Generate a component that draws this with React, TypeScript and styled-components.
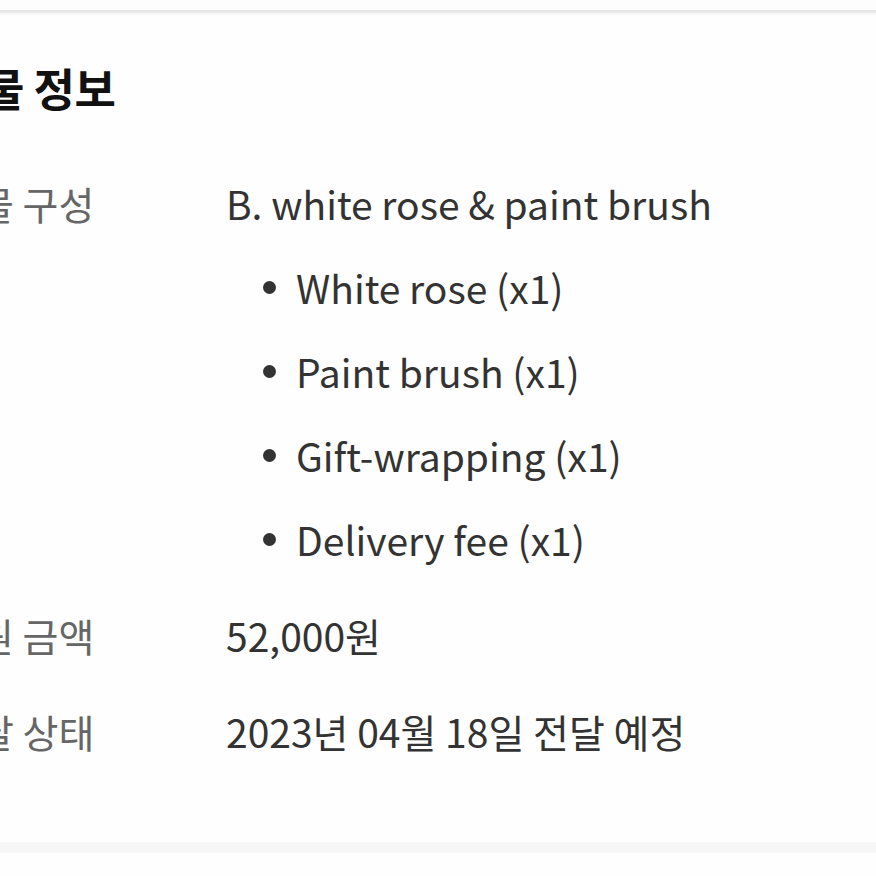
import React from "react";
import styled, { createGlobalStyle } from "styled-components";

const Global = createGlobalStyle`
  html, body { margin: 0; padding: 0; background: #fefefe; }
  body { font-family: "Noto Sans CJK KR", "Noto Sans", sans-serif; overflow: hidden; }
`;

const Page = styled.div`
  width: 876px;
  height: 876px;
  overflow: hidden;
  background: #fefefe;
  display: flex;
  flex-direction: column;
`;

const TopGap = styled.div`
  height: 10px;
  background: #fdfdfd;
`;

const TopRule = styled.div`
  height: 5px;
  background: linear-gradient(#e6e6e6 0, #e6e6e6 2px, #f3f3f3 3px, #fafafa 5px);
`;

const Section = styled.section`
  margin-left: -58px;
  padding: 47px 0 86px;
  display: flex;
  flex-direction: column;
`;

const Title = styled.h2`
  margin: 0 0 64px;
  font-size: 45px;
  line-height: 52px;
  font-weight: 700;
  color: #111;
  letter-spacing: -0.5px;
`;

const Rows = styled.div`
  display: flex;
  flex-direction: column;
  gap: 46px;
`;

const Row = styled.div`
  display: grid;
  grid-template-columns: 284px 1fr;
  align-items: start;
`;

const Label = styled.div`
  font-size: 39px;
  line-height: 50px;
  color: #666;
  white-space: nowrap;
`;

const Value = styled.div`
  font-size: 39px;
  line-height: 50px;
  color: #333;
  white-space: nowrap;
`;

const Items = styled.ul`
  list-style: none;
  margin: 34px 0 0;
  padding: 0 0 0 37px;
  display: flex;
  flex-direction: column;
  gap: 34px;
`;

const Item = styled.li`
  display: flex;
  align-items: center;
  gap: 20px;
  font-size: 39px;
  line-height: 50px;
  color: #333;
`;

const Dot = styled.span`
  width: 13px;
  height: 13px;
  border-radius: 50%;
  background: #333;
  flex: none;
`;

const BottomBand = styled.div`
  height: 11px;
  background: #f7f7f7;
`;

const items = ["White rose (x1)", "Paint brush (x1)", "Gift-wrapping (x1)", "Delivery fee (x1)"];

export default function App() {
  return (
    <Page>
      <Global />
      <TopGap />
      <TopRule />
      <Section>
        <Title>선물 정보</Title>
        <Rows>
          <Row>
            <Label>선물 구성</Label>
            <div>
              <Value>B. white rose &amp; paint brush</Value>
              <Items>
                {items.map((t) => (
                  <Item key={t}>
                    <Dot />
                    {t}
                  </Item>
                ))}
              </Items>
            </div>
          </Row>
          <Row>
            <Label>후원 금액</Label>
            <Value>52,000원</Value>
          </Row>
          <Row>
            <Label>전달 상태</Label>
            <Value>2023년 04월 18일 전달 예정</Value>
          </Row>
        </Rows>
      </Section>
      <BottomBand />
    </Page>
  );
}
